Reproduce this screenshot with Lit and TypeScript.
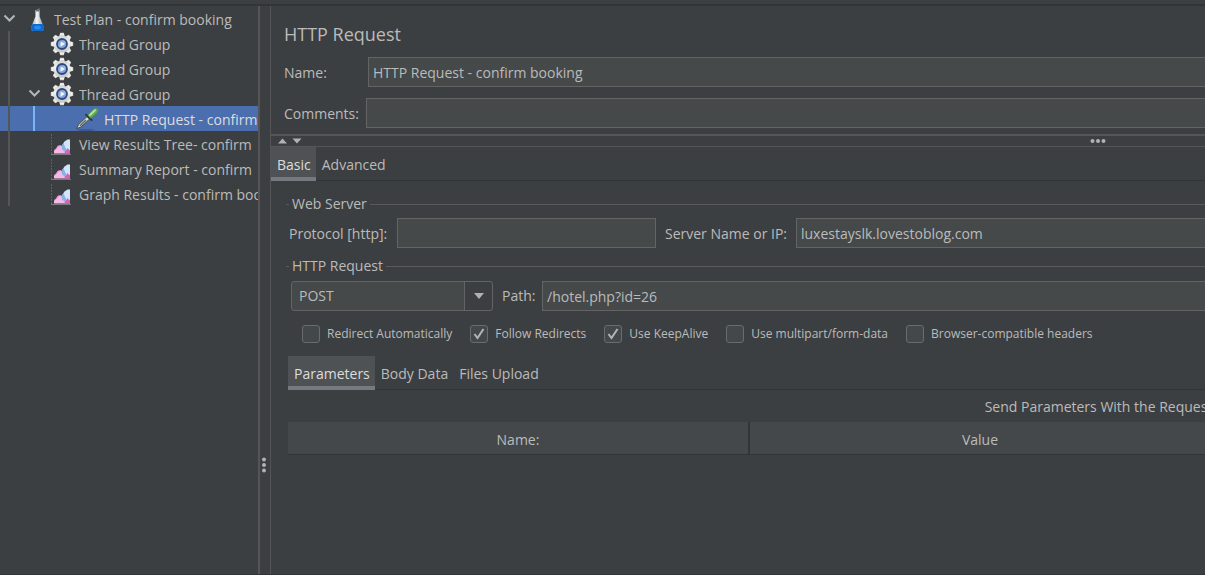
import { LitElement, css, html, svg, nothing } from "lit";
import { customElement, property, state } from "lit/decorators.js";

type IconName = "flask" | "gear" | "dropper" | "chart";

interface TreeNode {
  label: string;
  icon: IconName;
  level: 1 | 2 | 3;
  open?: boolean;
}

const nodes: TreeNode[] = [
  { label: "Test Plan - confirm booking", icon: "flask", level: 1, open: true },
  { label: "Thread Group", icon: "gear", level: 2 },
  { label: "Thread Group", icon: "gear", level: 2 },
  { label: "Thread Group", icon: "gear", level: 2, open: true },
  { label: "HTTP Request - confirm", icon: "dropper", level: 3 },
  { label: "View Results Tree- confirm", icon: "chart", level: 2 },
  { label: "Summary Report - confirm", icon: "chart", level: 2 },
  { label: "Graph Results - confirm boo", icon: "chart", level: 2 },
];

const toothAngles = [0, 45, 90, 135, 180, 225, 270, 315];

const icons = {
  flask: svg`
    <defs>
      <linearGradient id="glass" x1="0" x2="1">
        <stop offset="0" stop-color="#8d9399" /><stop offset=".45" stop-color="#f4f6f8" /><stop offset="1" stop-color="#878d93" />
      </linearGradient>
    </defs>
    <ellipse cx="12" cy="22.6" rx="9.4" ry="1.8" fill="#2b3d55" />
    <path d="M10.4 3H14.6V9.5L19 20.500Q19.600 24 16 24H9Q5.400 24 6 20.500L10.400 9.500Z" fill="url(#glass)" />
    <path d="M7.600 17H17.600L19 20.500Q19.600 24 16 24H9Q5.400 24 6 20.500Z" fill="#1268c8" />
    <ellipse cx="12.500" cy="20.600" rx="3.400" ry="2" fill="#1f8df2" />
    <path d="M11 3 14.600 1V4.500H11Z" fill="#6f767c" />`,
  gear: svg`
    <defs>
      <linearGradient id="steel" x1="0" y1="0" x2="0" y2="1">
        <stop offset="0" stop-color="#d0d0ce" /><stop offset=".4" stop-color="#f2f2f0" /><stop offset="1" stop-color="#c4c4c2" />
      </linearGradient>
      <linearGradient id="hub" x1="0" y1="0" x2="1" y2="1">
        <stop offset="0" stop-color="#5c7db6" /><stop offset=".5" stop-color="#9db8e2" /><stop offset="1" stop-color="#5b82c4" />
      </linearGradient>
    </defs>
    <g fill="url(#steel)">
      ${toothAngles.map((a) => svg`<path d="M10.200 .8H13.800L15 5H9Z" transform="rotate(${a} 12 12)" />`)}
      <circle cx="12" cy="12" r="8.600" />
    </g>
    <circle cx="12" cy="12" r="5" fill="url(#hub)" stroke="#2a4a80" stroke-width="1.800" />
    <path d="M10.600 9.600 15 12 10.600 14.400Z" fill="#f2f6fc" />`,
  dropper: svg`
    <ellipse cx="11" cy="23" rx="9" ry="1" fill="#3c5a94" />
    <path d="M1.600 21.600 3.400 17.800 12 9.600 14.600 12 6 20Z" fill="#d9dcda" stroke="#3f4a45" stroke-width="1" />
    <path d="M5 18.800 11 13" stroke="#66706c" stroke-width="1.600" />
    <path d="M11 7.600 16.600 13" stroke="#2e3a33" stroke-width="2" stroke-linecap="round" />
    <path d="M12.600 8.600 17.600 3Q19.600 .6 22 1.600T21.800 6L15.800 11.600Z" fill="#5ea946" />
    <path d="M15 8 20 3.200" stroke="#b4e394" stroke-width="2" stroke-linecap="round" />`,
  chart: svg`
    <path d="M1.500 2V22.500" stroke="#5c6063" stroke-width="1" stroke-dasharray="2 1" />
    <path d="M1 22.500H21" stroke="#777b7e" stroke-width="1" />
    <path d="M4 21.500V18.500L6 17 8 14 11 13.500 13.500 16 20 17V21.500Z" fill="#f5b9e6" />
    <path d="M4 18.500 6 17 8 14 11 13.500" stroke="#dd86c8" stroke-width="1" fill="none" />
    <path d="M11.500 14 14.500 9.500 17.500 7.500 20 7.500V18L17.500 16.500 14.500 19.500 12 17.500Z" fill="#d3e5fb" />
    <path d="M11.500 14 13.500 11 15 15 16.500 17.500 14.500 19.500 12 17.500Z" fill="#86b0e8" />
    <path d="M17.600 16.500 20 18.500V21.500H15L14.500 19.800Z" fill="#d464b4" />`,
};

@customElement("plan-icon")
class PlanIcon extends LitElement {
  static styles = css`
    :host { display: block; width: 24px; height: 24px; }
    .glyph { display: block; }
  `;
  @property() name: IconName = "gear";
  render() {
    return html`<svg class="glyph" width="24" height="24" viewBox="0 0 24 24" fill="none" aria-hidden="true">${icons[this.name]}</svg>`;
  }
}

@customElement("plan-tree")
class PlanTree extends LitElement {
  static styles = css`
    :host { display: block; overflow: hidden; border-right: 2px solid #555555; }
    .tree { margin: 0; padding: 0; list-style: none; }
    .row {
      display: flex; align-items: center; height: 25px;
      white-space: nowrap; cursor: default;
    }
    .selected { background: #4b6eaf; color: #dddddd; }
    .rail { flex: none; height: 25px; box-sizing: border-box; }
    .lead { width: 8px; }
    .guide { width: 17px; border-left: 2px solid #555555; }
    .deep { width: 25px; }
    .active { width: 42px; border-left: 2px solid #7ab6f7; }
    .twisty { display: block; width: 25px; height: 25px; flex: none; }
    .icon { flex: none; margin-right: 5px; }
    .label { min-width: 0; overflow: hidden; padding-top: 2px; }
  `;
  @state() private selected = 4;

  private twisty(open?: boolean) {
    return html`<svg class="twisty" viewBox="0 0 25 25" fill="none" aria-hidden="true">
      ${open ? svg`<path d="M4.500 9.500 9.500 14.500 14.500 9.500" stroke="#b4b6b8" stroke-width="2" />` : nothing}
    </svg>`;
  }

  render() {
    return html`<ul class="tree" role="tree" aria-label="Test plan">
      ${nodes.map(
        (n, i) => html`<li
          class="row ${i === this.selected ? "selected" : ""}"
          role="treeitem"
          aria-level=${n.level}
          aria-selected=${i === this.selected}
          @click=${() => (this.selected = i)}
        >
          ${n.level > 1
            ? html`<span class="rail lead"></span><span class="rail guide ${n.level > 2 ? "deep" : ""}"></span>`
            : nothing}
          ${n.level > 2 ? html`<span class="rail active"></span>` : this.twisty(n.open)}
          <plan-icon class="icon" name=${n.icon}></plan-icon>
          <span class="label">${n.label}</span>
        </li>`
      )}
    </ul>`;
  }
}

@customElement("tab-strip")
class TabStrip extends LitElement {
  static styles = css`
    :host { display: block; }
    .strip { display: flex; border-bottom: 1px solid #323537; }
    .tab {
      margin: 0 0 -1px; padding: 5px 5px 0 6px; height: 34px; box-sizing: border-box;
      border: 0; border-bottom: 4px solid transparent; background: none;
      color: inherit; font: inherit; cursor: default;
    }
    .current { background: #4e5254; border-bottom-color: #747a80; color: #dddddd; }
  `;
  @property({ attribute: false }) tabs: string[] = [];
  @property() label = "";
  @state() private current = 0;
  render() {
    return html`<div class="strip" role="tablist" aria-label=${this.label}>
      ${this.tabs.map(
        (t, i) => html`<button
          type="button" role="tab" aria-selected=${i === this.current}
          class="tab ${i === this.current ? "current" : ""}"
          @click=${() => (this.current = i)}
        >${t}</button>`
      )}
    </div>`;
  }
}

const options = [
  { label: "Redirect Automatically", on: false },
  { label: "Follow Redirects", on: true },
  { label: "Use KeepAlive", on: true },
  { label: "Use multipart/form-data", on: false },
  { label: "Browser-compatible headers", on: false },
];

@customElement("app-root")
class AppRoot extends LitElement {
  static styles = css`
    :host {
      display: grid; grid-template-rows: 6px 1fr; min-height: 100vh; box-sizing: border-box;
      background: #3c3f41; color: #bbbbbb; border-bottom: 1px solid #323537;
      font: 14px/20px "Open Sans", "Noto Sans", sans-serif; overflow: hidden;
    }
    .top { box-sizing: border-box; border-bottom: 2px solid #323537; }
    .body { display: grid; grid-template-columns: 260px 10px minmax(0, 1fr); }
    .splitter { display: flex; justify-content: center; padding: 451px 2px 0 0; }
    .dots { display: block; }
    .main { border-left: 1px solid #555555; overflow: hidden; }
    .title { margin: 0; padding: 14px 13px 9px; font-size: 18px; line-height: 28px; font-weight: 400; }
    .line { display: flex; align-items: center; white-space: nowrap; }
    .head { padding-left: 13px; margin-bottom: 11px; }
    .key { flex: none; width: 84px; padding-top: 2px; }
    .key.wide { width: 82px; }
    .field {
      flex: 1; min-width: 0; height: 30px; box-sizing: border-box; margin: 0;
      padding: 0 4px; border: 1px solid #646464; border-right: 0; border-radius: 0;
      background: #45494a; color: #bbbbbb; font: inherit; outline: 0;
    }
    .field.short { flex: none; width: 259px; border-right: 1px solid #646464; }
    .divider {
      display: flex; align-items: center; justify-content: space-between;
      height: 10px; margin-top: -5px; padding: 0 99px 0 6px;
      border-top: 2px solid #555555; border-bottom: 1px solid #555555;
    }
    .group { margin: 0 0 0 15px; padding: 0; border: 0; min-width: 0; }
    .group.first { margin-top: 11px; }
    .legend { display: flex; align-items: center; gap: 3px; width: 100%; padding: 0; height: 24px; }
    .legend::before { content: ""; width: 3px; height: 1px; background: #5a5a5a; }
    .legend::after { content: ""; flex: 1; height: 1px; background: #5a5a5a; }
    .server { padding: 2px 0 6px 3px; }
    .request { padding: 3px 0 0 5px; }
    .protocol { flex: none; width: 108px; padding-top: 2px; }
    .host { flex: none; width: 131px; margin-left: 9px; padding-top: 2px; }
    .path { flex: none; width: 40px; margin-left: 9px; }
    .combo { display: grid; grid-template-columns: 173px 29px; flex: none; align-items: center; }
    .select {
      grid-area: 1 / 1 / 2 / 3; appearance: none; height: 30px; margin: 0; padding: 0 7px;
      border: 1px solid #646464; border-radius: 3px; color: #bbbbbb; font: inherit; outline: 0;
      background: linear-gradient(90deg, #45494a 172px, #646464 172px 173px, #3c3f41 173px);
    }
    .arrow { grid-area: 1 / 2; justify-self: center; pointer-events: none; }
    .checks { display: flex; gap: 18px; padding: 13px 0 12px 16px; white-space: nowrap; }
    .check { display: flex; align-items: center; gap: 7px; font-size: 12px; }
    .tick { display: grid; }
    .box {
      grid-area: 1 / 1; appearance: none; width: 18px; height: 18px; margin: 0;
      border: 1px solid #6b6b6b; border-radius: 3px; background: #43494a;
    }
    .mark { grid-area: 1 / 1; visibility: hidden; pointer-events: none; }
    .box:checked + .mark { visibility: visible; }
    .panel { margin: 0 -5px 0 17px; }
    .caption {
      display: flex; justify-content: flex-end; height: 20px;
      margin: 7px -6px 5px 0; white-space: nowrap;
    }
    .table { width: 100%; border-collapse: collapse; table-layout: fixed; }
    .cell { height: 28px; padding: 4px 0 0; background: #45484a; border-bottom: 1px solid #323537; font-weight: 400; text-align: center; }
    .cell + .cell { border-left: 2px solid #323537; }
  `;

  render() {
    return html`
      <div class="top"></div>
      <div class="body">
        <plan-tree></plan-tree>
        <div class="splitter" role="separator">
          <svg class="dots" width="6" height="16" fill="#afb1b3"><circle cx="3" cy="2.500" r="2" /><circle cx="3" cy="8" r="2" /><circle cx="3" cy="13.500" r="2" /></svg>
        </div>
        <main class="main">
          <h1 class="title">HTTP Request</h1>
          <div class="line head">
            <label class="key" for="name">Name:</label>
            <input class="field" id="name" value="HTTP Request - confirm booking" />
          </div>
          <div class="line head">
            <label class="key wide" for="comments">Comments:</label>
            <input class="field" id="comments" />
          </div>
          <div class="divider" role="separator">
            <svg width="26" height="6" fill="#afb1b3"><path d="M1 5.500 5.500 .5 10 5.500ZM15.500 .5H24.500L20 5.500Z" /></svg>
            <svg width="16" height="6" fill="#afb1b3"><circle cx="2.500" cy="3" r="2" /><circle cx="8" cy="3" r="2" /><circle cx="13.500" cy="3" r="2" /></svg>
          </div>
          <tab-strip label="Request views" .tabs=${["Basic", "Advanced"]}></tab-strip>

          <fieldset class="group first">
            <legend class="legend">Web Server</legend>
            <div class="line server">
              <label class="protocol" for="protocol">Protocol [http]:</label>
              <input class="field short" id="protocol" />
              <label class="host" for="host">Server Name or IP:</label>
              <input class="field" id="host" value="luxestayslk.lovestoblog.com" />
            </div>
          </fieldset>

          <fieldset class="group">
            <legend class="legend">HTTP Request</legend>
            <div class="line request">
              <span class="combo">
                <select class="select" aria-label="Method">
                  <option>GET</option>
                  <option selected>POST</option>
                  <option>PUT</option>
                  <option>DELETE</option>
                </select>
                <svg class="arrow" width="12" height="6" fill="#afb1b3"><path d="M1 0H11L6 6Z" /></svg>
              </span>
              <label class="path" for="path">Path:</label>
              <input class="field" id="path" value="/hotel.php?id=26" />
            </div>
            <div class="checks">
              ${options.map(
                (o) => html`<label class="check">
                  <span class="tick">
                    <input class="box" type="checkbox" .checked=${o.on} />
                    <svg class="mark" width="18" height="18" fill="none"><path d="M4.500 9 7.500 13 13.500 4" stroke="#b4b4b4" stroke-width="2" /></svg>
                  </span>
                  ${o.label}
                </label>`
              )}
            </div>
          </fieldset>

          <section class="panel">
            <tab-strip label="Request content" .tabs=${["Parameters", "Body Data", "Files Upload"]}></tab-strip>
            <div class="caption">Send Parameters With the Request:</div>
            <table class="table">
              <thead>
                <tr>
                  <th class="cell" scope="col">Name:</th>
                  <th class="cell" scope="col">Value</th>
                </tr>
              </thead>
            </table>
          </section>
        </main>
      </div>
    `;
  }
}
